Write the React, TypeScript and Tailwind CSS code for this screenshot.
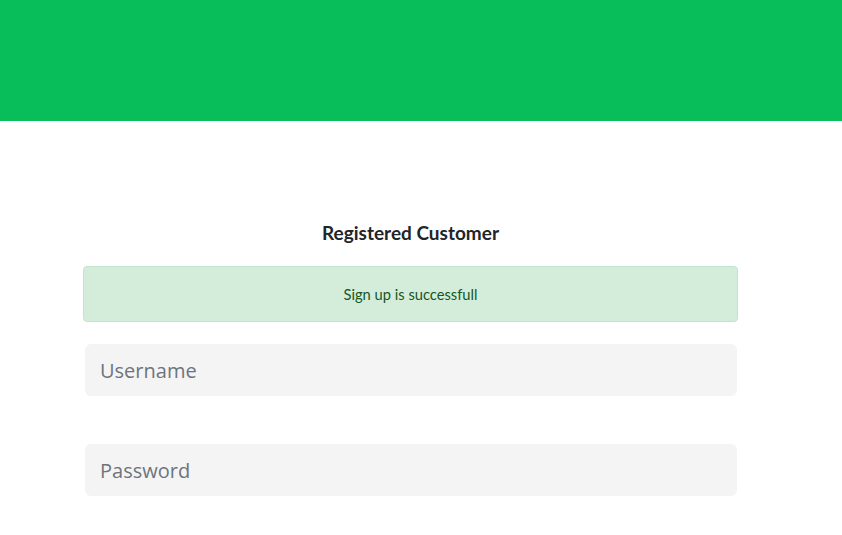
export default function App() {
  return (
    <div className="min-h-[535px] bg-white">
      <header className="h-[121px] bg-[#07be5a]" />
      <main className="ml-[83px] w-[655px] pt-[100px]">
        <h2 className="text-center text-[19px] font-bold leading-[24px] text-[#212529] font-['Lato',sans-serif]">
          Registered Customer
        </h2>
        <div className="mt-[21px] flex h-[56px] items-center justify-center rounded border border-[#c3e6cb] bg-[#d4edda] font-['Lato',sans-serif] text-[14.7px] text-[#155724]">
          Sign up is successfull
        </div>
        <form className="ml-[2px] mr-[1px] mt-[22px] flex flex-col gap-[48px]">
          <input
            type="text"
            placeholder="Username"
            className="h-[52px] w-full rounded-md bg-[#f4f4f4] px-[15px] font-['Open_Sans',sans-serif] text-[20px] text-[#495057] outline-none placeholder:text-[#6c757d]"
          />
          <input
            type="password"
            placeholder="Password"
            className="h-[52px] w-full rounded-md bg-[#f4f4f4] px-[15px] font-['Open_Sans',sans-serif] text-[20px] text-[#495057] outline-none placeholder:text-[#6c757d]"
          />
        </form>
      </main>
    </div>
  );
}
